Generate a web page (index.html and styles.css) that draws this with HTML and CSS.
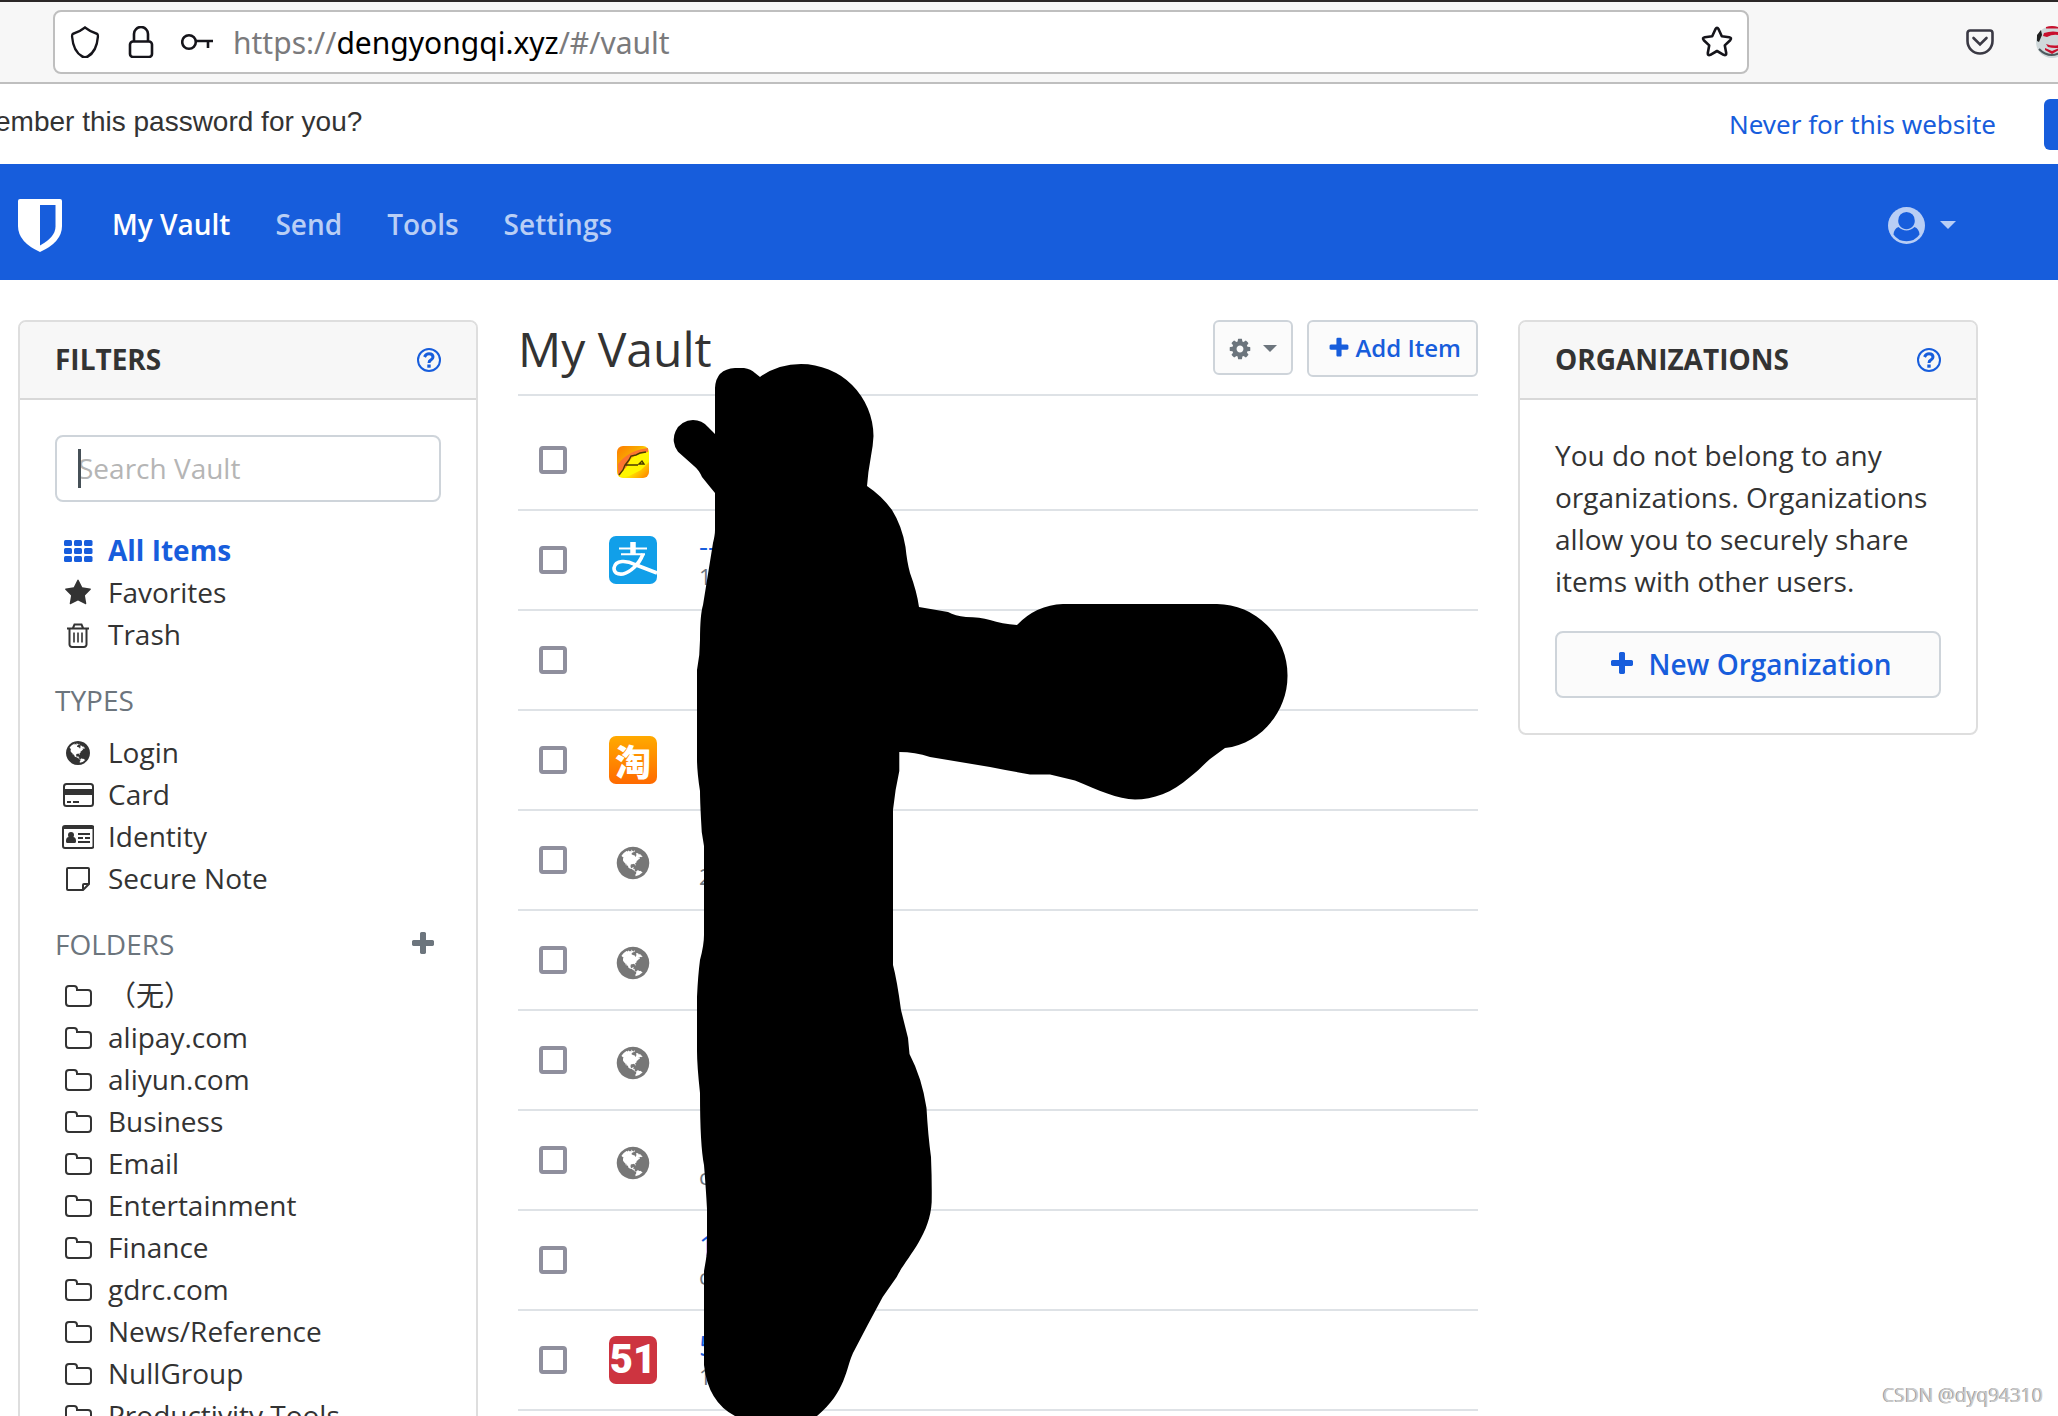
FILE: index.html
```html
<!DOCTYPE html>
<html lang="en">
<head>
<meta charset="utf-8">
<title>My Vault</title>
<link rel="stylesheet" href="styles.css">
</head>
<body>
<svg class="sprite" aria-hidden="true">
  <symbol id="i-th" viewBox="0 0 32 28"><g fill="currentColor"><rect x="2" y="3" width="8" height="6" rx="1.5"/><rect x="12" y="3" width="8" height="6" rx="1.5"/><rect x="22" y="3" width="8.500" height="6" rx="1.5"/><rect x="2" y="11" width="8" height="6" rx="1.5"/><rect x="12" y="11" width="8" height="6" rx="1.5"/><rect x="22" y="11" width="8.500" height="6" rx="1.5"/><rect x="2" y="19" width="8" height="6" rx="1.5"/><rect x="12" y="19" width="8" height="6" rx="1.5"/><rect x="22" y="19" width="8.500" height="6" rx="1.5"/></g></symbol>
  <symbol id="i-star" viewBox="-128 0 2048 1792"><path fill="currentColor" d="M1728 647q0 22-26 48l-363 354 86 500q1 7 1 20 0 21-10.5 35.5t-30.5 14.5q-19 0-40-12l-449-236-449 236q-22 12-40 12-21 0-31.5-14.5t-10.5-35.500q0-6 2-20l86-500-364-354q-25-27-25-48 0-37 56-46l502-73 225-455q19-41 49-41t49 41l225 455 502 73q56 9 56 46z"/></symbol>
  <symbol id="i-trash" viewBox="0 0 32 28"><g fill="none" stroke="currentColor" stroke-width="2"><path d="M5 7.500H27M11 7l1.500-3.500h7L21 7M7.500 8v15.500a2.500 2.500 0 0 0 2.500 2.500h12a2.500 2.500 0 0 0 2.500-2.500V8"/><path stroke-width="1.600" d="M12 11.500v10M16 11.500v10M20 11.500v10"/></g></symbol>
  <symbol id="i-globe" viewBox="-128 0 2048 1792"><path fill="currentColor" d="M896 128q209 0 385.5 103t279.5 279.5 103 385.5-103 385.5-279.5 279.5-385.5 103-385.5-103-279.5-279.5-103-385.5 103-385.5 279.5-279.5 385.5-103zm274 521q-2 1-9.500 9.500t-13.500 9.500q2 0 4.500-5t5-11 3.500-7q6-7 22-15 14-6 52-12 34-8 51 11-2-2 9.500-13t14.500-12q3-2 15-4.500t15-7.500l2-22q-12 1-17.500-7t-6.500-21q0 2-6 8 0-7-4.500-8t-11.500 1-9 1q-10-3-15-7.500t-8-16.500-4-15q-2-5-9.500-11t-9.500-10q-1-2-2.500-5.500t-3-6.500-4-5.500-5.500-2.500-7 5-7.500 10-4.500 5q-3-2-6-1.500t-4.500 1-4.500 3-5 3.500q-3 2-8.500 3t-8.500 2q15-5-1-11-10-4-16-3 9-4 7.500-12t-8.500-14h5q-1-4-8.500-8.500t-17.500-8.500-13-6q-8-5-34-9.500t-33-.5q-5 6-4.500 10.500t4 14 3.500 12.500q1 6-5.500 13t-6.500 12q0 7 14 15.500t10 21.500q-3 8-16 16t-16 12q-5 8-1.500 18.500t10.500 16.500q2 2 1.500 4t-3.500 4.500-5.500 4-6.500 3.500l-3 2q-11 5-20.500-6t-13.500-26q-7-25-16-30-23-8-29 1-5-13-41-26-25-9-58-4 6-1 0-15-7-15-19-12 3-6 4-17.500t1-13.500q3-13 12-23 1-1 7-8.500t9.500-13.500.5-6q35 4 50-11 5-5 11.500-17t10.500-17q9-6 14-5.500t14.500 5.500 14.500 5q14 1 15.500-11t-7.500-20q12 1 3-17-4-7-8-9-12-4-27 5-8 4 2 8-1-1-9.500 10.500t-16.500 17.500-16-5q-1-1-5.500-13.500t-9.500-13.500q-8 0-16 15 3-8-11-15t-24-8q19-12-8-27-7-4-20.500-5t-19.500 4q-5 7-5.500 11.500t5 8 10.500 5.500 11.500 4 8.500 3q14 10 8 14-2 1-8.500 3.500t-11.500 4.500-6 4q-3 4 0 14t-2 14q-5-5-9-17.500t-7-16.500q7 9-25 6l-10-1q-4 0-16 2t-20.500 1-13.500-8q-4-8 0-20 1-4 4-2-4-3-11-9.500t-10-8.500q-46 15-94 41 6 1 12-1 5-2 13-6.500t10-5.500q34-14 42-7l5-5q14 16 20 25-7-4-30-1-20 6-22 12 7 12 5 18-4-3-11.500-10t-14.500-11-15-5q-16 0-22 1-146 80-235 222 7 7 12 8 4 1 5 9t2.500 11 11.500-3q9 8 3 19 1-1 44 27 19 17 21 21 3 11-10 18-1-2-9-9t-9-4q-3 5 .5 18.500t10.500 12.500q-7 0-9.500 16t-2.500 35.500-1 23.500l2 1q-3 12 5.500 34.500t21.500 19.500q-13 3 20 43 6 8 8 9 3 2 12 7.500t15 10 10 10.500q4 5 10 22.500t14 23.500q-2 6 9.500 20t10.500 23q-1 0-2.500 1t-2.500 1q3 7 15.500 14t15.500 13q1 3 2 10t3 11 8 2q2-20-24-62-15-25-17-29-3-5-5.500-15.500t-4.500-14.500q2 0 6 1.500t8.500 3.500 7.500 4 2 3q-3 7 2 17.500t12 18.500 17 19 12 13q6 6 14 19.500t0 13.500q9 0 20 10.500t17 19.500q5 8 8 26t5 24q2 7 8.500 13.500t12.500 9.500l16 8 13 7q5 2 18.500 10.500t21.500 11.500q10 4 16 4t14.500-2.500 13.500-3.500q15-2 29 15t21 21q36 19 55 11-2 1 .5 7.500t8 15.500 9 14.500 5.500 8.500q5 6 18 15t18 15q6-4 7-9-3 8 7 20t18 10q14-3 14-32-31 15-49-18 0-1-2.500-5.500t-4-8.500-2.500-8.500 0-7.500 5-3q9 0 10-3.500t-2-12.500-4-13q-1-8-11-20t-12-15q-5 9-16 8t-16-9q0 1-1.500 5.500t-1.500 6.500q-13 0-15-1 1-3 2.500-17.500t3.500-22.500q1-4 5.500-12t7.500-14.500 4-12.500-4.500-9.500-17.500-2.500q-19 1-26 20-1 3-3 10.500t-5 11.500-9 7q-7 3-24 2t-24-5q-13-8-22.500-29t-9.500-37q0-10 2.500-26.500t3-25-5.500-24.500q3-2 9-9.500t10-10.500q2-1 4.500-1.500t4.500 0 4-1.500 3-6q-1-1-4-3-3-3-4-3 7 3 28.500-1.500t27.500 1.500q15 11 22-2 0-1-2.500-9.500t-.5-13.500q5 27 29 9 3 3 15.500 5t17.500 5q3 2 7 5.500t5.500 4.500 5-.5 8.500-6.500q10 14 12 24 11 40 19 44 7 3 11 2t4.500-9.500 0-14-1.500-12.500l-1-8v-18l-1-8q-15-3-18.500-12t1.500-18.500 15-18.500q1-1 8-3.500t15.500-6.500 12.500-8q21-19 15-35 7 0 11-9-1 0-5-3t-7.500-5-4.500-2q9-5 2-16 5-3 7.500-11t7.500-10q9 12 21 2 8-8 1-16 5-7 20.500-10.500t18.500-9.500q7 2 8-2t1-12 3-12q4-5 15-9t13-5l17-11q3-4 0-4 18 2 31-11 10-11-6-20 3-6-3-9.500t-15-5.500q3-1 11.500-.5t10.500-1.500q15-10-7-16-17-5-43 12zm-163 877q206-36 351-189-3-3-12.500-4.500t-12.500-3.500q-18-7-24-8 1-7-2.500-13t-8-9-12.500-8-11-7q-2-2-7-6t-7-5.500-7.500-4.500-8.500-2-10 1l-3 1q-3 1-5.500 2.500t-5.500 3-4 3 0 2.500q-21-17-36-22-5-1-11-5.500t-10.500-7-10-1.500-11.500 7q-5 5-6 15t-2 13q-7-5 0-17.500t2-18.500q-3-6-10.500-4.500t-12 4.500-11.500 8.500-9 6.500-8.500 5.500-8.500 7.500q-3 4-6 12t-5 11q-2-4-11.500-6.500t-9.500-5.500q2 10 4 35t5 38q7 31-12 48-27 25-29 40-4 22 12 26 0 7-8 20.500t-7 21.500q0 6 2 16z"/></symbol>
  <symbol id="i-card" viewBox="0 0 32 28"><rect x="2" y="3" width="29" height="22" rx="2.500" fill="none" stroke="currentColor" stroke-width="2"/><path fill="currentColor" d="M2 8h29v6H2zM5 20h4v2H5zM11 20h6v2h-6z"/></symbol>
  <symbol id="i-id" viewBox="0 0 32 28"><rect x="1" y="3" width="30.500" height="22" rx="2" fill="none" stroke="currentColor" stroke-width="2"/><path fill="currentColor" d="M1 3h30v3H1zM16 10h12v2H16zM16 14h5v2h-5zM23 14h5v2h-5zM16 18h12v2H16zM4 18q0-4 3-4h4q3 0 3 4v.5q0 1.500-1.500 1.500h-7Q4 20 4 18.500z"/><circle cx="9" cy="12" r="3" fill="currentColor"/></symbol>
  <symbol id="i-note" viewBox="0 0 32 28"><path fill="none" stroke="currentColor" stroke-width="2" stroke-linejoin="round" d="M6 3h20q1 0 1 1v15l-6 6H6q-1 0-1-1V4q0-1 1-1zM27 19h-5q-1 0-1 1v5"/></symbol>
  <symbol id="i-folder" viewBox="0 0 32 28"><path fill="none" stroke="currentColor" stroke-width="2" d="M4 7a3 3 0 0 1 3-3h5a3 3 0 0 1 3 3v1h11a3 3 0 0 1 3 3v10a3 3 0 0 1-3 3H7a3 3 0 0 1-3-3z"/></symbol>
  <symbol id="i-plus" viewBox="0 0 1792 1792"><path fill="currentColor" d="M1600 736v192q0 40-28 68t-68 28h-416v416q0 40-28 68t-68 28h-192q-40 0-68-28t-28-68v-416h-416q-40 0-68-28t-28-68v-192q0-40 28-68t68-28h416v-416q0-40 28-68t68-28h192q40 0 68 28t28 68v416h416q40 0 68 28t28 68z"/></symbol>
  <symbol id="i-cog" viewBox="0 0 1792 1792"><path fill="currentColor" d="M1152 896q0-106-75-181t-181-75-181 75-75 181 75 181 181 75 181-75 75-181zm512-109v222q0 12-8 23t-20 13l-185 28q-19 54-39 91 35 50 107 138 10 12 10 25t-9 23q-27 37-99 108t-94 71q-12 0-26-9l-138-108q-44 23-91 38-16 136-29 186-7 28-36 28h-222q-14 0-24.500-8.500t-11.500-21.500l-28-184q-49-16-90-37l-141 107q-10 9-25 9-14 0-25-11-126-114-165-168-7-10-7-23 0-12 8-23 15-21 51-66.500t54-70.500q-27-50-41-99l-183-27q-13-2-21-12.500t-8-23.500v-222q0-12 8-23t19-13l186-28q14-46 39-92-40-57-107-138-10-12-10-24 0-10 9-23 26-36 98.500-107.500t94.500-71.500q13 0 26 10l138 107q44-23 91-38 16-136 29-186 7-28 36-28h222q14 0 24.500 8.500t11.500 21.500l28 184q49 16 90 37l142-107q9-9 24-9 13 0 25 10 129 119 165 170 7 8 7 22 0 12-8 23-15 21-51 66.500t-54 70.500q26 50 41 98l183 28q13 2 21 12.500t8 23.500z"/></symbol>
  <symbol id="i-help" viewBox="0 0 24 24"><circle cx="12" cy="12" r="11" fill="none" stroke="currentColor" stroke-width="2"/><path fill="none" stroke="currentColor" stroke-width="3" d="M7.500 9Q9 5.800 12 5.800q4 0 4 3.200 0 1.800-2 2.900-2 1-2 3.100"/><path fill="currentColor" d="M10.300 16.500h3.400v3.200h-3.400z"/></symbol>
  <symbol id="i-caret" viewBox="0 0 16 8"><path fill="currentColor" d="M0 0h16L8 8z"/></symbol>
</svg>

<div class="toolbar">
  <div class="urlbar">
    <svg class="url-icon" viewBox="0 0 32 32"><path d="M16 1.500c3.500 2.500 8 4.800 12.500 6C30.500 8 30.500 9 30.300 11 29.500 20 26 27 19 30.500q-3 1.500-6 0C6 27 2.500 20 1.700 11 1.500 9 1.500 8 3.500 7.500 8 6.300 12.500 4 16 1.500z" transform="translate(1.600 0) scale(.9 1)"/></svg>
    <svg class="url-icon" viewBox="0 0 32 32"><rect x="5" y="15.500" width="22" height="15.500" rx="3"/><path d="M9 15V8a7 7 0 0 1 14 0v7"/></svg>
    <svg class="url-icon" viewBox="0 0 32 32"><circle cx="8" cy="16" r="6.800"/><path d="M15 15h17M27 15v7"/></svg>
    <div class="address">https://<span class="domain">dengyongqi.xyz</span>/#/vault</div>
    <svg class="url-icon" viewBox="0 0 32 32"><path stroke-linejoin="round" d="M14.400 3.200q1.600-2.800 3.200 0l3.200 7 7.400 1q3 .6 1 3l-5.400 5.200 1.400 7.600q.2 3-2.600 1.800L16 25l-6.600 3.800q-2.800 1.200-2.600-1.800l1.400-7.600L2.800 14.200q-2-2.400 1-3l7.400-1z"/></svg>
  </div>
  <svg class="pocket" viewBox="0 0 28 26"><path d="M4 1.500h20a2.500 2.500 0 0 1 2.500 2.500v8a12.500 12.500 0 0 1-25 0V4A2.500 2.500 0 0 1 4 1.500zM7.500 9l6.500 6.500L20.500 9"/></svg>
  <svg class="avatar" viewBox="0 0 32 32"><circle cx="16" cy="16" r="16" fill="#cfd8da"/><path fill="#c8102e" d="M10 1q6-2 12 0v1.500H10zM8 7q9-3 18 0v3Q18 7 11 11l-4-1zM10 18q8 3 18 0v3q-9 2-16 0zM9 22l7 3 7-3v2l-7 4-7-4z"/><path fill="#222" d="M1 9l4-5 1 5-3 7-2-1z"/><path fill="none" stroke="#4d5a5e" stroke-width="2" d="M3 23q12 12 26 0"/></svg>
</div>

<div class="notice">
  <span class="notice-text">ember this password for you?</span>
  <a class="never" href="#">Never for this website</a>
  <button class="save" aria-label="Save"></button>
</div>

<nav class="navbar">
  <svg class="logo" viewBox="0 0 44 53"><path fill="#fff" d="M2 0h40q2 0 2 2v25Q44 43 22 53 0 43 0 27V2Q0 0 2 0z"/><path fill="#175ddc" d="M22 6h15.500v21.500Q37.500 38 22 46.500z"/></svg>
  <a class="nav-link active" href="#">My Vault</a>
  <a class="nav-link" href="#">Send</a>
  <a class="nav-link" href="#">Tools</a>
  <a class="nav-link" href="#">Settings</a>
  <button class="account" aria-label="Account">
    <svg class="user" viewBox="0 0 37 37"><circle cx="18.500" cy="18.500" r="18.500" fill="currentColor"/><path fill="#175ddc" d="M18.500 5a8.300 8.300 0 0 1 8.300 8.800c0 4.600-3.700 8.400-8.300 8.400s-8.300-3.800-8.300-8.400A8.300 8.300 0 0 1 18.500 5zM10.500 20q3.500 3.400 8 3.400t8-3.400q4.500 1.500 5 7.500Q27 34.200 18.500 34.200T5.500 27.500q.5-6 5-7.500z"/></svg>
    <svg class="caret" viewBox="0 0 16 8"><use href="#i-caret"/></svg>
  </button>
</nav>

<div class="container">
  <aside class="card">
    <header class="card-header"><h2>Filters</h2><a href="#" aria-label="Help"><svg class="help"><use href="#i-help"/></svg></a></header>
    <div class="card-body">
      <div class="search"><input type="text" placeholder="Search Vault" aria-label="Search Vault"><span class="cursor"></span></div>
      <ul class="list">
        <li><a class="active" href="#"><svg class="icon"><use href="#i-th"/></svg>All Items</a></li>
        <li><a href="#"><svg class="icon"><use href="#i-star"/></svg>Favorites</a></li>
        <li><a href="#"><svg class="icon"><use href="#i-trash"/></svg>Trash</a></li>
      </ul>
      <h3>Types</h3>
      <ul class="list">
        <li><a href="#"><svg class="icon"><use href="#i-globe"/></svg>Login</a></li>
        <li><a href="#"><svg class="icon"><use href="#i-card"/></svg>Card</a></li>
        <li><a href="#"><svg class="icon"><use href="#i-id"/></svg>Identity</a></li>
        <li><a href="#"><svg class="icon"><use href="#i-note"/></svg>Secure Note</a></li>
      </ul>
      <h3 class="folders">Folders<button class="add-folder" aria-label="Add folder"><svg><use href="#i-plus"/></svg></button></h3>
      <ul class="list">
        <li><a href="#" lang="zh"><svg class="icon"><use href="#i-folder"/></svg>（无）</a></li>
        <li><a href="#"><svg class="icon"><use href="#i-folder"/></svg>alipay.com</a></li>
        <li><a href="#"><svg class="icon"><use href="#i-folder"/></svg>aliyun.com</a></li>
        <li><a href="#"><svg class="icon"><use href="#i-folder"/></svg>Business</a></li>
        <li><a href="#"><svg class="icon"><use href="#i-folder"/></svg>Email</a></li>
        <li><a href="#"><svg class="icon"><use href="#i-folder"/></svg>Entertainment</a></li>
        <li><a href="#"><svg class="icon"><use href="#i-folder"/></svg>Finance</a></li>
        <li><a href="#"><svg class="icon"><use href="#i-folder"/></svg>gdrc.com</a></li>
        <li><a href="#"><svg class="icon"><use href="#i-folder"/></svg>News/Reference</a></li>
        <li><a href="#"><svg class="icon"><use href="#i-folder"/></svg>NullGroup</a></li>
        <li><a href="#"><svg class="icon"><use href="#i-folder"/></svg>Productivity Tools</a></li>
      </ul>
    </div>
  </aside>

  <main class="vault">
    <header class="vault-header">
      <h1>My Vault</h1>
      <button class="btn btn-options" aria-label="Options"><svg class="btn-icon"><use href="#i-cog"/></svg><svg class="btn-caret"><use href="#i-caret"/></svg></button>
      <button class="btn btn-add"><svg class="btn-icon"><use href="#i-plus"/></svg>Add Item</button>
    </header>
    <table class="items">
      <tbody>
      <tr><td class="c-check"><input type="checkbox" aria-label="Select item 1"></td><td class="c-icon"><svg class="fav-sm" viewBox="0 0 32 32"><defs><linearGradient id="g1" x1="0" y1="0" x2="1" y2="1"><stop offset="0" stop-color="#ff7a00"/><stop offset=".35" stop-color="#f8a800"/><stop offset=".6" stop-color="#fff200"/><stop offset="1" stop-color="#ff7a00"/></linearGradient></defs><rect width="32" height="32" rx="6" fill="url(#g1)"/><path fill="#fff600" d="M15 12l5-4 12-3v11l-8 8-12 6-10 1 8-13z"/><path fill="#fb7430" d="M1 29V18Q12 4 31 2v4q-9 1-18 6-1 9-12 17z"/><path fill="none" stroke="#4a3b00" stroke-width="1.400" d="M2 29l4-5 2-5 4-5 2-4 5-1 4-2 6-1M8 19h13M22 18l3-3 2 3z"/></svg></td><td class="c-name"></td></tr>
      <tr><td class="c-check"><input type="checkbox" aria-label="Select item 2"></td><td class="c-icon"><svg class="fav" viewBox="0 0 48 48"><rect width="48" height="48" rx="7" fill="#119fe9"/><g fill="none" stroke="#fff"><path stroke-width="5.500" d="M24 6v12"/><path stroke-width="2" d="M10 12.500h28M12 18.300h24"/><path stroke-width="3.600" d="M34 18q-3 8-9 13.500T14 38q-9 1-9-6 1-6 8-6.500 6-.5 13 3l22 8.500"/></g></svg></td><td class="c-name"><a href="#">--</a><small>1</small></td></tr>
      <tr><td class="c-check"><input type="checkbox" aria-label="Select item 3"></td><td class="c-icon"></td><td class="c-name"></td></tr>
      <tr><td class="c-check"><input type="checkbox" aria-label="Select item 4"></td><td class="c-icon"><span class="badge taobao" lang="zh">淘</span></td><td class="c-name"></td></tr>
      <tr><td class="c-check"><input type="checkbox" aria-label="Select item 5"></td><td class="c-icon"><svg class="globe"><use href="#i-globe"/></svg></td><td class="c-name"><a href="#">&nbsp;</a><small>2</small></td></tr>
      <tr><td class="c-check"><input type="checkbox" aria-label="Select item 6"></td><td class="c-icon"><svg class="globe"><use href="#i-globe"/></svg></td><td class="c-name"></td></tr>
      <tr><td class="c-check"><input type="checkbox" aria-label="Select item 7"></td><td class="c-icon"><svg class="globe"><use href="#i-globe"/></svg></td><td class="c-name"></td></tr>
      <tr><td class="c-check"><input type="checkbox" aria-label="Select item 8"></td><td class="c-icon"><svg class="globe"><use href="#i-globe"/></svg></td><td class="c-name"><a href="#">&nbsp;</a><small>c</small></td></tr>
      <tr><td class="c-check"><input type="checkbox" aria-label="Select item 9"></td><td class="c-icon"></td><td class="c-name"><a href="#">1</a><small>c</small></td></tr>
      <tr><td class="c-check"><input type="checkbox" aria-label="Select item 10"></td><td class="c-icon"><span class="badge fifty-one">51</span></td><td class="c-name"><a href="#">5</a><small>1</small></td></tr>
      </tbody>
    </table>
    <svg class="scribble" viewBox="518 320 780 1096" aria-hidden="true"><path d="M715 388Q716 369 735 368H744Q751 369 755 373L760 377Q778 364 801 364A72.500 72.500 0 0 1 873.500 436Q873 446 871 456 868 472 867 486 882 496 892 510 902 526 905.500 547 907 562 910 573 917 592 919 607L948 612Q955 616 966 617 980 617 990 620 1002 624 1017 625 1036 605 1063 604H1217A71 71 0 0 1 1287.500 675C1288 712 1260 744 1225 748L1210 759C1203 765 1197 772 1190 777C1172 793 1153 799.500 1135 799.500C1118 799.500 1098 790 1075 780.500L1050 774.500H1030Q1010 771 990 767L930 757Q915 752 899.300 752V771Q895 790 893 810V965Q897 980 901 1010L908 1038 909.500 1054Q922 1078 926.500 1108Q928 1135 931 1157Q932 1180 931.700 1202C930 1236 906 1258 896.700 1277Q889 1288 882.700 1297 868 1324 853 1353C846 1368 846 1392 817 1416H735Q708 1402 704 1365V1271Q706 1260 707 1252V1209Q706 1190 704 1165 700 1145 700 1093 697 1065 697 1051V997Q698 975 700 960 704 945 704 935V846Q701 832 701 819 700 800 700 791 697 772 697 759V670Q700 655 700 640 700 615 703 605L713 543Q715 535 715 530V493Q706 482 702 477 699 470 694 466L678 451.700A19.500 19.500 0 0 1 693 420Q702 420 708 427L715 434z"/></svg>
  </main>

  <aside class="card">
    <header class="card-header"><h2>Organizations</h2><a href="#" aria-label="Help"><svg class="help"><use href="#i-help"/></svg></a></header>
    <div class="card-body">
      <p>You do not belong to any organizations. Organizations allow you to securely share items with other users.</p>
      <button class="btn btn-block"><svg><use href="#i-plus"/></svg>New Organization</button>
    </div>
  </aside>
</div>
<div class="watermark">CSDN @dyq94310</div>
</body>
</html>
```
FILE: styles.css
```css
* { box-sizing: border-box; }

body {
  margin: 0;
  height: 100vh;
  overflow: hidden;
  background: #fff;
  color: #333;
  font: 28px/42px "Open Sans", "Noto Sans CJK SC", sans-serif;
}

a { color: inherit; text-decoration: none; }
button { font: inherit; cursor: pointer; }
svg { display: block; flex: none; }
h1, h2, h3, p, ul { margin: 0; padding: 0; font-weight: 400; }
.sprite { position: absolute; width: 0; height: 0; }

/* browser toolbar */
.toolbar {
  display: flex;
  align-items: center;
  height: 84px;
  padding-left: 53px;
  overflow: hidden;
  background: #f7f7f7;
  border-top: 2px solid #2b2828;
  border-bottom: 2px solid #bfbfbf;
}
.urlbar {
  flex: 1;
  display: flex;
  align-items: center;
  gap: 24px;
  height: 64px;
  padding: 0 14px;
  background: #fff;
  border: 2px solid #bfbfbf;
  border-radius: 8px;
}
.url-icon { width: 32px; height: 32px; fill: none; stroke: #15141a; stroke-width: 2.6; }
.address { flex: 1; margin-left: -4px; padding-top: 2px; font-family: "Noto Sans", sans-serif; font-size: 30px; color: #7a7a7c; }
.domain { color: #000; }
.pocket { width: 28px; height: 26px; margin: 0 42px 0 217px; fill: none; stroke: #3a3944; stroke-width: 2.6; stroke-linecap: round; }
.avatar { width: 32px; height: 32px; margin-right: -10px; }

.notice { display: flex; align-items: center; height: 80px; overflow: hidden; }
.notice-text { flex: 1; margin-left: -5px; padding-bottom: 5px; font-family: "Liberation Sans", sans-serif; }
.never { font-family: "Noto Sans", sans-serif; font-size: 26px; color: #175ddc; }
.save { width: 14px; height: 51px; margin-left: 48px; border: 0; border-radius: 6px 0 0 6px; background: #175ddc; }

.navbar {
  display: flex;
  align-items: center;
  gap: 45px;
  height: 116px;
  padding: 6px 102px 0 18px;
  background: #175ddc;
  font-weight: 600;
}
.logo { width: 44px; height: 53px; margin-right: 5px; }
.nav-link { padding-bottom: 2px; color: #b9cef5; }
.nav-link.active { color: #fff; }
.account {
  display: flex;
  align-items: center;
  gap: 15px;
  margin-left: auto;
  padding: 0;
  border: 0;
  background: none;
  color: #b9cef5;
}
.user { width: 37px; height: 37px; }
.caret { width: 16px; height: 8px; }

.container {
  display: grid;
  grid-template-columns: 23fr 48fr 23fr;
  gap: 40px;
  align-items: start;
  padding: 40px 80px 0 18px;
}

.card { border: 2px solid #dedede; border-radius: 8px; background: #fff; }
.card-header {
  display: flex;
  align-items: center;
  justify-content: space-between;
  padding: 16px 35px 18px;
  background: #f7f7f7;
  border-bottom: 2px solid #d8d8d8;
  border-radius: 6px 6px 0 0;
  color: #333;
}
.card-header h2 { font-size: 28px; font-weight: 700; text-transform: uppercase; }
.card-header a { color: #175ddc; }
.help { width: 24px; height: 24px; margin-top: 2px; }
.card-body { padding: 34px 35px 35px; }

.search { position: relative; margin: 1px 0 27px; }
.search input {
  display: block;
  width: 100%;
  height: 67px;
  padding: 0 21px 2px;
  border: 2px solid #ced4da;
  border-radius: 8px;
  background: #fff;
  color: #465057;
  font: inherit;
}
.search input::placeholder { color: #b5b5b5; opacity: 1; }
.cursor { position: absolute; left: 23px; top: 14px; width: 3px; height: 39px; background: #465057; }

.list { list-style: none; margin-bottom: 24px; }
.list a { display: flex; align-items: center; gap: 14px; height: 42px; padding-left: 7px; }
.list .active { color: #175ddc; font-weight: 700; }
.icon { width: 32px; height: 28px; margin-top: 2px; }
h3 {
  display: flex;
  align-items: center;
  justify-content: space-between;
  height: 42px;
  margin-bottom: 10px;
  font-size: 28px;
  color: #6c757d;
  text-transform: uppercase;
}
.folders { margin-bottom: 9px; }
.add-folder { padding: 0 4px; border: 0; background: none; color: #6c757d; }
.add-folder svg, .btn-block svg { width: 28px; height: 28px; }

.vault { position: relative; }
.vault-header {
  display: flex;
  align-items: flex-start;
  gap: 14px;
  padding-bottom: 16px;
  border-bottom: 2px solid #dee2e6;
}
.vault-header h1 { flex: 1; font-size: 48px; line-height: 58px; }
.btn {
  display: flex;
  align-items: center;
  justify-content: center;
  background: #fbfbfb;
  border: 2px solid #ced4da;
  border-radius: 6px;
  color: #175ddc;
  font-weight: 600;
}
.btn-options { gap: 11px; height: 55px; padding: 2px 14px 0 13px; color: #6c757d; }
.btn-icon { width: 24px; height: 24px; }
.btn-caret { width: 14px; height: 7px; }
.btn-add { gap: 4px; height: 57px; padding: 0 15px 1px 18px; font-size: 24px; }
.btn-block { width: 100%; height: 67px; gap: 12px; margin-top: 29px; padding: 0 0 2px 4px; border-radius: 8px; }

.items { width: 100%; margin-top: 15px; border-collapse: separate; border-spacing: 0; table-layout: fixed; }
.items td { height: 100px; padding: 0; border-bottom: 2px solid #dee2e6; vertical-align: middle; }
.items .c-check { width: 80px; padding-left: 21px; }
.items .c-icon { width: 70px; }
.c-icon > * { margin: 0 auto; }
.items .c-name { padding-left: 31px; line-height: 30px; }
.c-name a, .c-name small { display: block; }
.c-name a { color: #175ddc; }
.c-name small { padding-top: 1px; font-size: 22px; color: #6c757d; }
.c-check input {
  appearance: none;
  display: block;
  width: 28px;
  height: 28px;
  margin: 0;
  border: 4px solid #8f8f9d;
  border-radius: 4px;
  background: #fff;
}
.fav { width: 48px; height: 48px; }
.c-icon .fav-sm { width: 32px; height: 32px; margin-top: 4px; }
.c-icon .globe { width: 44px; height: 38px; margin-top: 5px; color: #777; }
.badge {
  display: block;
  width: 48px;
  height: 48px;
  border-radius: 7px;
  color: #fff;
  text-align: center;
  line-height: 48px;
}
.taobao { background: linear-gradient(#ffaa00, #ff6a00); font-family: "Noto Sans CJK SC", sans-serif; font-size: 36px; font-weight: 900; }
.fifty-one { background: #cd3440; font-family: Roboto, sans-serif; font-size: 40px; font-weight: 900; }
.scribble { position: absolute; left: 0; top: 0; width: 780px; height: 1096px; fill: #000; }

.watermark {
  position: absolute;
  right: 15px;
  bottom: 6px;
  font-size: 19px;
  font-family: "Noto Sans", sans-serif;
  line-height: 30px;
  color: #ccc;
  text-shadow: -1px 0 0 #999;
}
```
